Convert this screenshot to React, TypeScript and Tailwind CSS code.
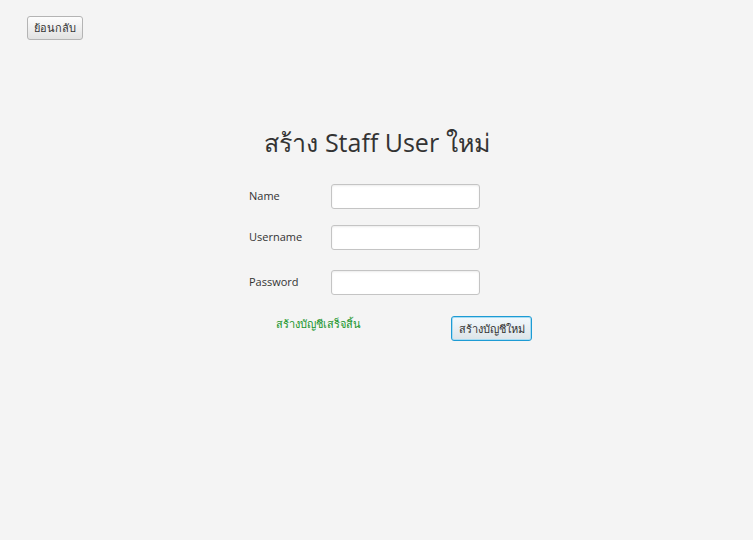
export default function App() {
  return (
    <div className="w-[753px] h-[540px] bg-[#f4f4f4] text-[#333333] font-['Open_Sans','Noto_Sans','DejaVu_Sans',sans-serif] overflow-hidden">
      <div className="pt-[14px] pl-[27px]">
        <button className="h-[24px] w-[56px] rounded-[3px] border border-[#b4b4b4] bg-gradient-to-b from-[#fdfdfd] to-[#e2e2e2] text-[11px] leading-none text-[#333]">
          ย้อนกลับ
        </button>
      </div>

      <h1 className="mt-[86px] h-[32px] text-center text-[25px] leading-[32px] pl-[1px]">สร้าง Staff User ใหม่</h1>

      <div className="mt-[26px] ml-[249px] flex flex-col">
        <div className="flex items-center h-[25px]">
          <span className="w-[82px] text-[11px]">Name</span>
          <input className="w-[149px] h-[25px] rounded-[3px] border border-[#c4c4c4] bg-white shadow-[inset_0_1px_2px_rgba(0,0,0,0.08)] outline-none" />
        </div>
        <div className="flex items-center h-[25px] mt-[16px]">
          <span className="w-[82px] text-[11px]">Username</span>
          <input className="w-[149px] h-[25px] rounded-[3px] border border-[#c4c4c4] bg-white shadow-[inset_0_1px_2px_rgba(0,0,0,0.08)] outline-none" />
        </div>
        <div className="flex items-center h-[25px] mt-[20px]">
          <span className="w-[82px] text-[11px]">Password</span>
          <input type="password" className="w-[149px] h-[25px] rounded-[3px] border border-[#c4c4c4] bg-white shadow-[inset_0_1px_2px_rgba(0,0,0,0.08)] outline-none" />
        </div>
        <div className="flex items-start mt-[21px]">
          <span className="ml-[27px] w-[175px] text-[11px] leading-[16px] text-[#17942a]">สร้างบัญชีเสร็จสิ้น</span>
          <button className="h-[25px] w-[81px] rounded-[3px] border border-[#1d9bd4] bg-gradient-to-b from-[#f2f9fd] to-[#dde4e8] shadow-[inset_0_0_0_1px_#a8dcf2] text-[11px] leading-none text-[#333]">
            สร้างบัญชีใหม่
          </button>
        </div>
      </div>
    </div>
  );
}
